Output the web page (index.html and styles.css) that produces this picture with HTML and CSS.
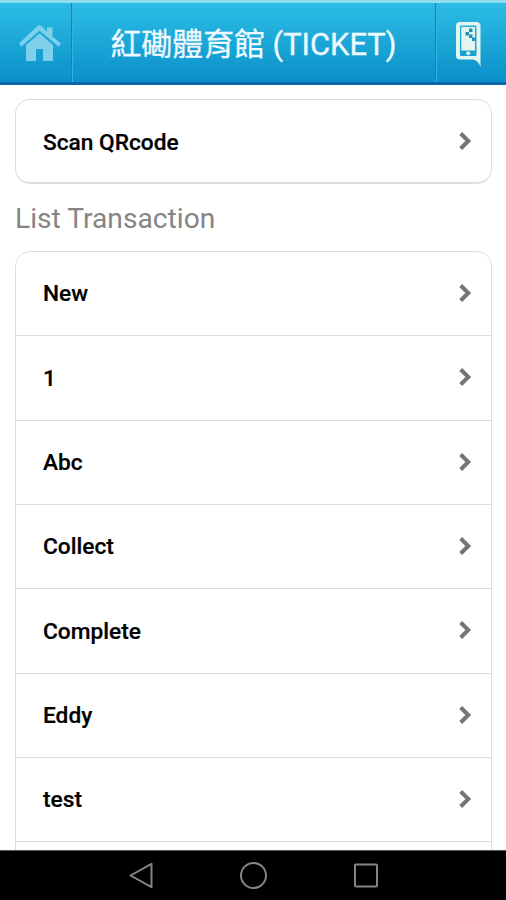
FILE: index.html
```html
<!DOCTYPE html>
<html lang="zh-Hant">
<head>
<meta charset="utf-8">
<title>紅磡體育館 (TICKET)</title>
<link rel="stylesheet" href="styles.css">
</head>
<body>
<div class="screen">
  <header class="topbar">
    <div class="topbar-side topbar-home">
      <svg class="icon-home" width="44" height="40" viewBox="0 0 44 40">
        <g fill="#7fd0eb">
          <path d="M1 20.500L19.500 3Q21.500 1.500 23.500 3L29 8.500V4.500H34.500V13.500L43 20.500L40.500 23.500L21.500 7.500L3.500 23.500Z"/>
          <path fill-rule="evenodd" d="M21.500 10.500L35 22V38H8V22ZM18 26V38H25V26Z"/>
        </g>
      </svg>
    </div>
    <h1 class="title">紅磡體育館 (TICKET)</h1>
    <div class="topbar-side topbar-scan">
      <svg class="icon-phone" width="28" height="48" viewBox="0 0 28 48">
        <path fill="#e4f5ef" fill-rule="evenodd" d="M5 1H21Q25.500 1 25.500 5V46Q23.500 39.500 18 38.500H5Q1 38.500 1 34.500V5Q1 1 5 1ZM6 4.500Q5 4.500 5 5.500V34Q5 35 6 35H20.500Q21.500 35 21.500 34V5.500Q21.500 4.500 20.500 4.500Z"/>
        <path fill="#e4f5ef" d="M6.300 6H20V29.500H6.300Z"/>
        <path fill="#1c93bd" d="M14 7.500H17.500V11H14ZM10.500 11H14V14.500H10.500ZM14 13.500H17.500V17H14ZM17 16.500H20.500V20H17Z"/>
        <circle cx="13.200" cy="32.300" r="2" fill="#e4f5ef"/>
      </svg>
    </div>
  </header>
  <main class="content">
    <ul class="list list-single">
      <li class="row"><span>Scan QRcode</span><svg class="chevron" width="14" height="20" viewBox="0 0 14 20"><path d="M2.700 2.500L10.300 10L2.700 17.500"/></svg></li>
    </ul>
    <h2 class="heading">List Transaction</h2>
    <ul class="list">
      <li class="row"><span>New</span><svg class="chevron" width="14" height="20" viewBox="0 0 14 20"><path d="M2.700 2.500L10.300 10L2.700 17.500"/></svg></li>
      <li class="row"><span>1</span><svg class="chevron" width="14" height="20" viewBox="0 0 14 20"><path d="M2.700 2.500L10.300 10L2.700 17.500"/></svg></li>
      <li class="row"><span>Abc</span><svg class="chevron" width="14" height="20" viewBox="0 0 14 20"><path d="M2.700 2.500L10.300 10L2.700 17.500"/></svg></li>
      <li class="row"><span>Collect</span><svg class="chevron" width="14" height="20" viewBox="0 0 14 20"><path d="M2.700 2.500L10.300 10L2.700 17.500"/></svg></li>
      <li class="row"><span>Complete</span><svg class="chevron" width="14" height="20" viewBox="0 0 14 20"><path d="M2.700 2.500L10.300 10L2.700 17.500"/></svg></li>
      <li class="row"><span>Eddy</span><svg class="chevron" width="14" height="20" viewBox="0 0 14 20"><path d="M2.700 2.500L10.300 10L2.700 17.500"/></svg></li>
      <li class="row"><span>test</span><svg class="chevron" width="14" height="20" viewBox="0 0 14 20"><path d="M2.700 2.500L10.300 10L2.700 17.500"/></svg></li>
      <li class="row"></li>
    </ul>
  </main>
  <nav class="navbar">
    <svg width="28" height="30" viewBox="0 0 28 30"><path d="M24.500 2.800V26.200L3.500 14.500Z"/></svg>
    <svg width="28" height="30" viewBox="0 0 28 30"><circle cx="14.500" cy="14.500" r="12.500"/></svg>
    <svg width="28" height="30" viewBox="0 0 28 30"><rect x="3" y="3.500" width="22" height="22" rx="1"/></svg>
  </nav>
</div>
</body>
</html>
```

FILE: styles.css
```css
* {
  box-sizing: border-box;
}

body {
  margin: 0;
  font-family: Roboto, "Noto Sans CJK TC", sans-serif;
  background: #fff;
}

.screen {
  display: flex;
  flex-direction: column;
  height: 900px;
  overflow: hidden;
}

.topbar {
  display: flex;
  flex: none;
  height: 85px;
  border-top: 3px solid #8fdced;
  border-bottom: 3px solid #0868a8;
  background: linear-gradient(#2bbde5, #0b90ca);
}

.topbar-side {
  display: flex;
  flex: none;
  width: 72px;
}

.topbar-home {
  padding: 20px 0 0 18px;
  border-right: 1px solid #1683b9;
  box-shadow: 1px 0 #37b0dc;
}

.topbar-scan {
  width: 71px;
  padding: 18px 0 0 19px;
  border-left: 1px solid #1683b9;
  box-shadow: inset 1px 0 #37b0dc;
}

.title {
  flex: 1;
  margin: 0;
  text-align: center;
  font-size: 30.900px;
  font-weight: 400;
  line-height: 83px;
  white-space: nowrap;
  color: #effaff;
  -webkit-text-stroke: 0.3px #effaff;
}

.content {
  flex: 1;
  min-height: 0;
  overflow: hidden;
  padding: 14px 14px 0 15px;
}

.list {
  margin: 0;
  padding: 0;
  list-style: none;
  border: 1px solid #dedede;
  border-radius: 15px;
}

.list-single {
  border-bottom: 2px solid #dedede;
}

.row {
  display: flex;
  align-items: center;
  justify-content: space-between;
  height: 84.330px;
  padding: 0 19px 0 27px;
  border-bottom: 1px solid #dedede;
  font-size: 22.700px;
  font-weight: 500;
  color: #000;
}

.row span {
  padding-top: 0.400px;
  -webkit-text-stroke: 0.2px #000;
}

.list-single .row {
  height: 82px;
  border: 0;
}

.list-single span {
  padding-top: 2px;
}

.chevron {
  margin-bottom: 1px;
  fill: none;
  stroke: #757575;
  stroke-width: 4;
}

.list-single .chevron {
  margin-bottom: 0;
}

.heading {
  margin: 0;
  height: 67px;
  line-height: 69px;
  font-size: 28.200px;
  font-weight: 400;
  color: #858585;
}

.navbar {
  display: flex;
  flex: none;
  justify-content: center;
  align-items: center;
  gap: 84.500px;
  height: 50px;
  border-top: 1px solid #555;
  background: #000;
}

.navbar svg {
  fill: none;
  stroke: #858585;
  stroke-width: 2;
  stroke-linejoin: round;
}
```
